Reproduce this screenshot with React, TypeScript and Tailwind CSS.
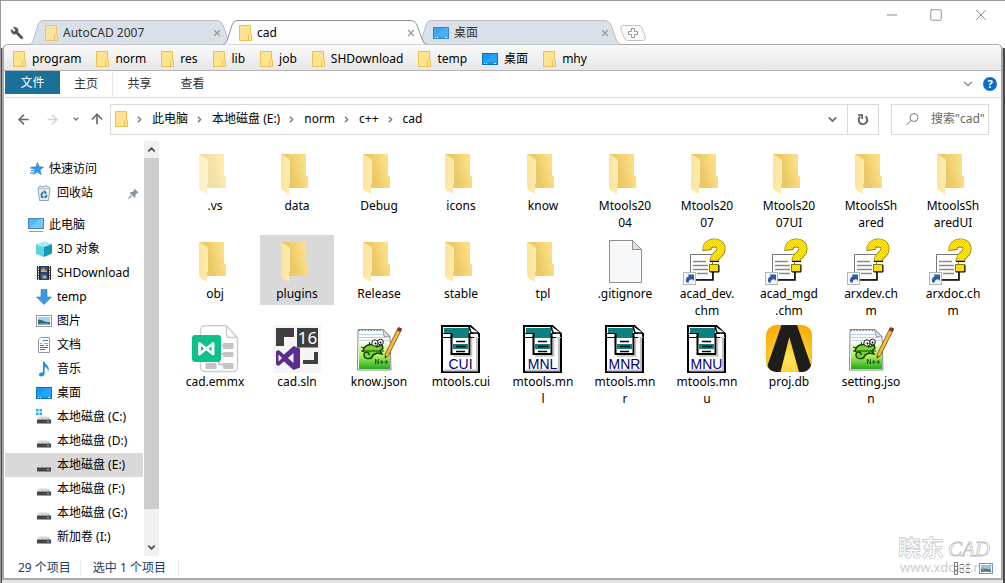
import React, { useState } from 'react';
import { ArrowLeft, ArrowRight, ArrowUp, ChevronDown, ChevronRight, ChevronUp, Minus, Square, Wrench, X } from 'lucide-react';

type FileKind = 'folder' | 'hidden' | 'blank' | 'chm' | 'emmx' | 'sln' | 'npp' | 'cui' | 'db';

interface FileEntry {
  name: string;
  kind: FileKind;
  tag?: string;
}

const FILES: FileEntry[] = [
  { name: '.vs', kind: 'hidden' },
  { name: 'data', kind: 'folder' },
  { name: 'Debug', kind: 'folder' },
  { name: 'icons', kind: 'folder' },
  { name: 'know', kind: 'folder' },
  { name: 'Mtools20\n04', kind: 'folder' },
  { name: 'Mtools20\n07', kind: 'folder' },
  { name: 'Mtools20\n07UI', kind: 'folder' },
  { name: 'MtoolsSh\nared', kind: 'folder' },
  { name: 'MtoolsSh\naredUI', kind: 'folder' },
  { name: 'obj', kind: 'folder' },
  { name: 'plugins', kind: 'folder' },
  { name: 'Release', kind: 'folder' },
  { name: 'stable', kind: 'folder' },
  { name: 'tpl', kind: 'folder' },
  { name: '.gitignore', kind: 'blank' },
  { name: 'acad_dev.\nchm', kind: 'chm' },
  { name: 'acad_mgd\n.chm', kind: 'chm' },
  { name: 'arxdev.ch\nm', kind: 'chm' },
  { name: 'arxdoc.ch\nm', kind: 'chm' },
  { name: 'cad.emmx', kind: 'emmx' },
  { name: 'cad.sln', kind: 'sln' },
  { name: 'know.json', kind: 'npp' },
  { name: 'mtools.cui', kind: 'cui', tag: 'CUI' },
  { name: 'mtools.mn\nl', kind: 'cui', tag: 'MNL' },
  { name: 'mtools.mn\nr', kind: 'cui', tag: 'MNR' },
  { name: 'mtools.mn\nu', kind: 'cui', tag: 'MNU' },
  { name: 'proj.db', kind: 'db' },
  { name: 'setting.jso\nn', kind: 'npp' },
];

/* ---------- small icons ---------- */

function SmallFolder({ className = '' }: { className?: string }) {
  return (
    <svg width="13" height="16" viewBox="0 0 13 16" className={`shrink-0 ${className}`}>
      <path d="M.5.5h11v8l1 .8v6.2H.5z" fill="#ffe391" stroke="#e9c24f" />
      <path d="M9.5 15V10l2-1.5" fill="none" stroke="#e9c24f" />
    </svg>
  );
}

function DesktopIcon({ className = '' }: { className?: string }) {
  return (
    <svg width="16" height="12" viewBox="0 0 16 12" className={`shrink-0 ${className}`}>
      <rect x=".5" y=".5" width="15" height="11" fill="#1499f5" stroke="#1070b8" />
      <path d="M1 9L11 1h4v8z" fill="#39aeff" opacity=".5" />
      <path d="M2 10.5h1M4 10.5h1M12 10.5h2" stroke="#fff" />
    </svg>
  );
}

function StarIcon() {
  return (
    <svg width="16" height="16" viewBox="0 0 16 16">
      <path d="M9.500 1.500l1.600 4.300 4.400.3-3.500 2.900 1.200 4.600-3.900-2.500-3.900 2.400 1.300-4.400-3.300-3 4.400-.2z" fill="#2f9bea" stroke="#1b7ac6" strokeWidth=".6" />
      <path d="M2 7h3M3 9.500h2.500M2 12h3" stroke="#1b7ac6" />
    </svg>
  );
}

function RecycleIcon() {
  return (
    <svg width="16" height="16" viewBox="0 0 16 16">
      <path d="M2 3l2-2 3 1 3-1.500L14 3l-1.500 12.500h-9z" fill="#e6eaed" stroke="#98a2a9" />
      <path d="M2 3.500h12" stroke="#b7bfc4" />
      <path d="M8 5.800l2 3M10.800 10l-1.200 2.200H8.500M5.200 10.200L7 7M5.300 10.500l.8 1.700h1.500" fill="none" stroke="#2374b8" strokeWidth="1.800" />
    </svg>
  );
}

function ComputerIcon() {
  return (
    <svg width="16" height="16" viewBox="0 0 16 16">
      <rect x=".5" y="1.500" width="15" height="10" fill="#4cb8f5" stroke="#4a88b0" />
      <path d="M1 11L12 2h3v9z" fill="#8bd6ff" opacity=".6" />
      <path d="M1 14.500h14" stroke="#8c9ba5" />
    </svg>
  );
}

function CubeIcon() {
  return (
    <svg width="16" height="16" viewBox="0 0 16 16">
      <path d="M0 3.500L8 .500l8 2.500-8 3z" fill="#a5ebf4" />
      <path d="M8 6l8-3v9.500L8 16z" fill="#149ab4" />
      <path d="M0 3.500L8 6v10l-8-3z" fill="#5ed3e3" />
    </svg>
  );
}

function FilmIcon() {
  return (
    <svg width="16" height="16" viewBox="0 0 16 16">
      <rect x="1" y="1" width="14" height="14" fill="#2a2a2c" />
      <path d="M2.500 1v14M13.500 1v14" stroke="#fff" strokeDasharray="1.500 1" />
      <rect x="4.500" y="1.500" width="7" height="6" fill="#3c5a9b" />
      <rect x="4.500" y="8.500" width="7" height="6" fill="#2758a8" />
      <path d="M5 5l3-2 1 2 2 1v1H5zM6 12l2-2 3 2-2 2z" fill="#d4ad3d" />
    </svg>
  );
}

function DownIcon() {
  return (
    <svg width="16" height="16" viewBox="0 0 16 16">
      <path d="M5 .5h6V8h4.500L8 15.500.5 8H5z" fill="#3b97e3" stroke="#2c7fc8" strokeWidth=".6" />
    </svg>
  );
}

function PictureIcon() {
  return (
    <svg width="16" height="16" viewBox="0 0 16 16">
      <rect x=".5" y="2.500" width="15" height="11" fill="#fff" stroke="#9a9a9a" />
      <rect x="2" y="4" width="12" height="8" fill="#a9d4ef" />
      <path d="M2 7c4-1 7 3 12 2v3H2z" fill="#356882" />
      <path d="M2 11c4-1 8-1 12 0v1H2z" fill="#8aa9ba" />
    </svg>
  );
}

function DocumentIcon() {
  return (
    <svg width="16" height="16" viewBox="0 0 16 16">
      <path d="M2.500 2.500L4.500.5h9v15h-11z" fill="#fff" stroke="#8f979c" />
      <path d="M7 3.500h5M4 8.500h4M10 8.500h2M4 10.500h8M4 12.500h5" stroke="#2a86b8" />
      <path d="M4 6.500h2M8 6.500h4" stroke="#7db4d2" />
    </svg>
  );
}

function MusicIcon() {
  return (
    <svg width="16" height="16" viewBox="0 0 16 16">
      <path d="M7 .5h1.500c.5 3 4.500 4 4.300 7.500 0 1-.5 2-1 2.500.3-2.500-1-4-3.100-4.500v6.500c0 2-1.500 3-3.200 3-1.500 0-2.500-.8-2.500-2 0-1.500 1.600-2.600 4-2.300z" fill="#1e93e0" />
    </svg>
  );
}

function DriveIcon({ system = false }: { system?: boolean }) {
  return (
    <svg width="16" height="16" viewBox="0 0 16 16">
      {system && <path d="M0 0h2.500v2.500H0zM3.500 0H6v2.500H3.500zM0 3.500h2.500V6H0zM3.500 3.500H6V6H3.500z" fill="#22b3e6" />}
      <path d="M3.500 7.500h9l2.500 3H1z" fill="#d3d6d8" />
      <rect x="1" y="10.500" width="14" height="4" fill="#41474b" />
      <rect x="11" y="12" width="2" height="1" fill="#5fe07a" />
    </svg>
  );
}

function PinIcon() {
  return (
    <svg width="11" height="11" viewBox="0 0 11 11" className="mr-1">
      <path d="M6.500.5l4 4-1.200.4-2 2 .2 2.100-.9.700L1.800 4.900l.8-.9 2 .1 1.800-2z" fill="#8495a5" />
      <path d="M3.500 7.500L.5 10.500" stroke="#8495a5" strokeWidth="1.200" />
    </svg>
  );
}

/* ---------- 48px file icons ---------- */

function FolderArt() {
  return (
    <>
      <defs>
        <linearGradient id="folderBack" x1="0" x2="1" y1=".3" y2="0">
          <stop offset=".3" stopColor="#ecc967" />
          <stop offset=".8" stopColor="#fbdf85" />
        </linearGradient>
        <linearGradient id="folderFlap" x1="0" x2="1">
          <stop offset="0" stopColor="#fee399" />
          <stop offset="1" stopColor="#ffecb3" />
        </linearGradient>
      </defs>
      <path d="M8 5h25v21.500l2 1V39H16z" fill="url(#folderBack)" />
      <path d="M8 5l7.500 4.500q1.500 1 1.500 3V34l-1 1.500V45l-6-3.500q-2-1.200-2-3z" fill="url(#folderFlap)" />
    </>
  );
}

function BlankArt() {
  return (
    <>
      <path d="M8.500 3.500h23l9 9v33h-32z" fill="#f7f8f9" stroke="#8f8f8f" />
      <path d="M31.500 3.500v9h9z" fill="#dfe2e4" stroke="#8f8f8f" />
    </>
  );
}

function ChmArt() {
  return (
    <>
      <defs>
        <pattern id="dither" width="2" height="2" patternUnits="userSpaceOnUse">
          <rect width="2" height="2" fill="#fff200" />
          <path d="M0 0h1v1H0zM1 1h1v1H1z" fill="#f0d000" />
        </pattern>
      </defs>
      <path d="M7.500 17.500h22v25h-22z" fill="#fff" stroke="#777" />
      <path d="M30 33v10H13" fill="none" stroke="#000" strokeWidth="1.500" />
      <path d="M10 24.500h13M10 28.500h15M10 32.500h15M14 36.500h11" stroke="#8a8a8a" strokeWidth="1.500" />
      <path d="M24 13.500C23 4 38.500 3.500 38 12c0 6-7 6-7 12.500" fill="none" stroke="#8a8000" strokeWidth="9" />
      <path d="M24 12.500C23 4 38.500 3.500 38 12c0 6-7 6-7 11.500" fill="none" stroke="url(#dither)" strokeWidth="7.500" />
      <rect x="26.500" y="27.500" width="9" height="7" fill="url(#dither)" stroke="#8a8000" />
      <path d="M27 35h9v-7M27 24.500h9" fill="none" stroke="#000" />
      <rect x=".5" y="35.500" width="12" height="12" fill="#f5f8fb" stroke="#b5b5b5" />
      <path d="M3 45c-.5-3 1-5.500 3-6L4.500 37.500H11V44L9.300 42.300C7 42.500 5.500 43.500 5.500 46z" fill="#2c5da3" />
    </>
  );
}

function EmmxArt() {
  return (
    <>
      <path d="M14 .7h21.500L46.500 13v29a4.500 4.500 0 0 1-4.500 4.500H14A4.500 4.500 0 0 1 9.500 42V5.200A4.500 4.500 0 0 1 14 .7z" fill="#fff" stroke="#cfcfcf" strokeWidth="1.500" />
      <path d="M35.500 1v8.500a3 3 0 0 0 3 3H46" fill="none" stroke="#cfcfcf" strokeWidth="1.500" />
      <path d="M28 20.500h6M28 29h6M28 32v7.500h6" fill="none" stroke="#c9c9c9" strokeWidth="2" />
      <rect x="32" y="18" width="10.500" height="6" rx="1" fill="#c4c4c4" />
      <rect x="14.500" y="38" width="11" height="6" rx="1" fill="#c4c4c4" />
      <rect x="32" y="27" width="10.500" height="5" rx="1" fill="#c4c4c4" />
      <rect x="32" y="38" width="10.500" height="6" rx="1" fill="#c4c4c4" />
      <rect x="1" y="10" width="29" height="27" rx="3" fill="#0fc08a" />
      <path d="M8.500 29V18.500L22 29V18.500M8.500 29l5-4M22 18.500l-5 4" fill="none" stroke="#fff" strokeWidth="2.800" strokeLinejoin="round" strokeLinecap="round" />
    </>
  );
}

function SlnArt() {
  return (
    <>
      <rect width="48" height="48" fill="#f5f5f5" />
      <path d="M3 3h18v9H11v9H3z" fill="#3f3f42" />
      <rect x="24" y="3" width="21" height="19.500" fill="#3f3f42" />
      <text x="34.500" y="19" textAnchor="middle" fontSize="17" fill="#fff" fontFamily="Noto Sans, sans-serif">16</text>
      <path d="M41 27h4v12H30v-4h11z" fill="#3f3f42" />
      <path d="M20.500 21L27 23.500v19L20.500 45 11 36.500 5.500 41 3 39.500v-13L5.500 25l5.500 4.500zM20.500 28L15 33l5.500 5zM5.500 29.500v7L9 33z" fill="#5c2d91" fillRule="evenodd" />
    </>
  );
}

function NppArt() {
  return (
    <>
      <defs>
        <linearGradient id="nppGreen" x1="0" x2="0" y1="0" y2="1">
          <stop offset="0" stopColor="#f4ffd8" />
          <stop offset=".5" stopColor="#a5ee5c" />
          <stop offset="1" stopColor="#25a81c" />
        </linearGradient>
      </defs>
      <path d="M3 4.500h25l7 7L36 45H2.500z" fill="#fbfbfb" stroke="#8b8b8b" />
      <path d="M4 9.500h24M4 12.500h28M4 15.500h30" stroke="#b9d7e8" />
      <path d="M3.500 5.500h25" stroke="#777" strokeDasharray="1.500 1.500" />
      <path d="M28 4.500l1 7 6 .5z" fill="#ddd" stroke="#8b8b8b" strokeWidth=".8" />
      <rect x="4" y="18" width="31" height="26" fill="url(#nppGreen)" />
      <path d="M8 27c0-7 9-10 14-5l5-2 1 3-3 3 2 3-5-1-4 2c-1 5-10 5-9-1 1-3 6-2 5 1" fill="#79d52d" stroke="#123c0b" strokeWidth="1.400" />
      <path d="M6 26h23M10 23l-4-1M15 20l-1-3" stroke="#123c0b" />
      <circle cx="20" cy="18" r="3.200" fill="#fff" stroke="#222" />
      <circle cx="25.500" cy="17" r="2.800" fill="#fff" stroke="#222" />
      <circle cx="20.500" cy="18.500" r="1" />
      <circle cx="25.500" cy="17.500" r="1" />
      <path d="M20.500 39v-5l3 5v-5M25 37h3.500M26.800 35v4M29.500 37H33M31.300 35v4" fill="none" stroke="#123c0b" strokeWidth=".8" />
      <path d="M43 3l3.500 1.500-13 26L30 33l.5-4.500z" fill="#f5b63a" stroke="#7b4a12" strokeWidth=".8" />
      <path d="M43.500 2l3.500 1.500-1.500 3.500L42 5.500z" fill="#8a2f2f" />
      <path d="M30 33l.2-2 1.500.8z" />
    </>
  );
}

function CuiArt({ tag }: { tag?: string }) {
  return (
    <>
      <path d="M5 1h28.500L42 9v38H5z" fill="#fff" stroke="#000" strokeWidth="2" />
      <path d="M40 12v33.500H7" fill="none" stroke="#c0c0c0" strokeWidth="2" />
      <rect x="7" y="3" width="25" height="5" fill="#0f8080" />
      <path d="M32 1.500l2 6.500h8" fill="#fff" stroke="#000" strokeWidth="1.600" />
      <path d="M6 12.500h36" stroke="#c0c0c0" />
      <rect x="14.500" y="12" width="18" height="17" fill="#fff" stroke="#000" strokeWidth="2" />
      <path d="M34.500 13v18H16" fill="none" stroke="#c0c0c0" strokeWidth="1.500" />
      <rect x="15" y="8" width="17" height="5" fill="#0f8080" />
      <path d="M14.500 8v5M32.500 8v5" stroke="#000" strokeWidth="2" />
      <path d="M6 8.500h9M32 8.500h5M6 12.500h9M32 12.500h5" stroke="#000" />
      <rect x="16" y="19" width="15" height="5" fill="#0f8080" />
      <path d="M19 16.500h9M19 21.500h10M19 26.500h9" stroke="#000" strokeWidth="1.400" />
      <text x="23.500" y="44" textAnchor="middle" fontSize="14" fill="#00007a" fontFamily="Liberation Sans, sans-serif">{tag}</text>
    </>
  );
}

function DbArt() {
  return (
    <>
      <defs>
        <radialGradient id="dbBack" cx=".5" cy=".75" r=".75">
          <stop offset="0" stopColor="#ffe75a" />
          <stop offset="1" stopColor="#fbae05" />
        </radialGradient>
      </defs>
      <rect x="1" y="0" width="46" height="47" rx="10" fill="url(#dbBack)" />
      <path d="M16.500 0h15.500L46 40.500Q44 46 38 47h-4L24.300 12 15.500 47H11Q4 46 2.500 40.500z" fill="#1d1d1b" />
    </>
  );
}

function FileIcon({ kind, tag }: { kind: FileKind; tag?: string }) {
  return (
    <svg width="48" height="48" viewBox="0 0 48 48" className={kind === 'hidden' ? 'opacity-60' : ''}>
      {(kind === 'folder' || kind === 'hidden') && <FolderArt />}
      {kind === 'blank' && <BlankArt />}
      {kind === 'chm' && <ChmArt />}
      {kind === 'emmx' && <EmmxArt />}
      {kind === 'sln' && <SlnArt />}
      {kind === 'npp' && <NppArt />}
      {kind === 'cui' && <CuiArt tag={tag} />}
      {kind === 'db' && <DbArt />}
    </svg>
  );
}

/* ---------- window parts ---------- */

interface TabProps {
  title: string;
  icon: React.ReactNode;
  active?: boolean;
}

function Tab({ title, icon, active }: TabProps) {
  return (
    <div className={`relative flex h-[25px] w-[194px] shrink-0 items-center ${active ? 'z-10' : ''}`}>
      <svg width="206" height="25" viewBox="0 0 206 25" className="absolute top-0 -left-1.5">
        <path
          d="M1 24.500C4 24 5 21 6 18L10 5Q11.500 .5 15 .5H188Q193 .5 195 5L200 19Q201.500 24 205 24.500"
          fill={active ? '#fdfdfd' : '#d9e0e8'}
          stroke={active ? '#8e9296' : '#b8bec4'}
        />
      </svg>
      <button className="relative flex h-full flex-1 items-center gap-[5px] pt-px pl-[11px] text-left">
        {icon}
        <span className={active ? 'text-black' : 'text-[#333]'}>{title}</span>
      </button>
      <button aria-label="关闭标签" className="relative mr-1.5 text-[#999]">
        <X size={10} strokeWidth={3} />
      </button>
    </div>
  );
}

function TitleBar() {
  return (
    <header className="flex h-[43px] shrink-0 items-start justify-between">
      <div className="flex items-center pt-[19px]">
        <button aria-label="设置" className="mr-2 ml-[9px] text-[#555]">
          <Wrench size={14} fill="currentColor" strokeWidth={1} className="-scale-x-100" />
        </button>
        <nav className="ml-0.5 flex">
          <Tab title="AutoCAD 2007" icon={<SmallFolder className="opacity-80" />} />
          <Tab title="cad" icon={<SmallFolder />} active />
          <Tab title="桌面" icon={<DesktopIcon className="opacity-80" />} />
        </nav>
        <button aria-label="新标签" className="ml-1">
          <svg width="26" height="16" viewBox="0 0 26 16">
            <path d="M3 .5h16q2 0 3 3l3 8q1 4-3 4H8q-3 0-4-3L.8 4Q0 .5 3 .5z" fill="#fafafa" stroke="#bfc3c6" />
            <path d="M11.500 3.500h3v3h3v3h-3v3h-3v-3h-3v-3h3z" fill="#fff" stroke="#999" />
          </svg>
        </button>
      </div>
      <div className="flex h-7 items-center gap-[29px] pr-[15px] text-[#888]">
        <button aria-label="最小化">
          <Minus size={16} strokeWidth={1.5} />
        </button>
        <button aria-label="最大化">
          <Square size={14} strokeWidth={1.5} />
        </button>
        <button aria-label="关闭">
          <X size={18} strokeWidth={1.3} />
        </button>
      </div>
    </header>
  );
}

const BOOKMARKS = ['program', 'norm', 'res', 'lib', 'job', 'SHDownload', 'temp', '桌面', 'mhy'];

function BookmarkBar() {
  return (
    <nav className="flex h-[26px] items-center gap-[15px] rounded-t border-b border-[#b4b4b4] bg-linear-to-b from-[#fafafa] to-[#e7e7e7] px-[9px] pt-0.5">
      {BOOKMARKS.map((name) => (
        <button key={name} className="flex items-center gap-1.5">
          {name === '桌面' ? <DesktopIcon /> : <SmallFolder />}
          {name}
        </button>
      ))}
    </nav>
  );
}

function Ribbon() {
  return (
    <div className="ml-px flex h-[27px] items-start border-b border-[#dadbdc]">
      <button className="h-[23px] w-[55px] bg-[#1a7099] text-white">文件</button>
      <button className="h-[26px] w-[53px] border-r border-[#e8e8e8] text-[#333]">主页</button>
      <button className="h-[26px] w-[53px] text-[#333]">共享</button>
      <button className="h-[26px] w-[53px] text-[#333]">查看</button>
      <div className="ml-auto flex h-[26px] items-center gap-2 pr-1">
        <button aria-label="展开功能区" className="text-[#888]">
          <ChevronDown size={14} strokeWidth={2} />
        </button>
        <button aria-label="帮助" className="h-3.5 w-3.5 rounded-full bg-[#0a6fc9] text-[11px] leading-[14px] font-bold text-white">
          ?
        </button>
      </div>
    </div>
  );
}

const CRUMBS = ['此电脑', '本地磁盘 (E:)', 'norm', 'c++', 'cad'];

function AddressRow() {
  return (
    <div className="flex h-[43px] items-center pr-3 pb-px pl-3">
      <div className="flex w-[94px] items-center">
        <button aria-label="后退" className="text-[#666]">
          <ArrowLeft size={15} strokeWidth={2.4} />
        </button>
        <button aria-label="前进" className="ml-3.5 text-[#d4d4d4]">
          <ArrowRight size={15} strokeWidth={2.4} />
        </button>
        <button aria-label="最近" className="ml-3 text-[#777]">
          <ChevronDown size={8} strokeWidth={4} />
        </button>
        <button aria-label="上移" className="ml-[9px] text-[#666]">
          <ArrowUp size={16} strokeWidth={2.4} />
        </button>
      </div>
      <div className="flex h-[31px] flex-1 items-center border border-[#d9d9d9] pl-1">
        <SmallFolder />
        {CRUMBS.map((crumb) => (
          <React.Fragment key={crumb}>
            <ChevronRight size={9} strokeWidth={4} className="mr-2 ml-[7px] shrink-0 text-[#777]" />
            <button className="whitespace-nowrap">{crumb}</button>
          </React.Fragment>
        ))}
        <button aria-label="历史记录" className="mr-2 ml-auto text-[#666]">
          <ChevronDown size={13} strokeWidth={3} />
        </button>
        <button aria-label="刷新" className="flex h-full w-[31px] items-center justify-center border-l border-[#d9d9d9]">
          <svg width="12" height="13" viewBox="0 0 12 13" fill="none" stroke="#555" strokeWidth="1.700">
            <path d="M8.500 3.500A4.300 4.300 0 1 1 3.300 3.600" />
            <path d="M1 2h4.200v4" strokeWidth="1.500" />
          </svg>
        </button>
      </div>
      <div className="ml-3 flex h-[31px] w-[98px] items-center border border-[#d9d9d9] pl-3.5">
        <svg width="13" height="13" viewBox="0 0 13 13" fill="none" stroke="#777" className="shrink-0">
          <circle cx="8" cy="4.500" r="4" />
          <path d="M5 7.500L.5 12" />
        </svg>
        <input type="text" aria-label="搜索" placeholder={'搜索"cad"'} className="ml-3 w-full min-w-0 outline-none placeholder:text-[#666]" />
      </div>
    </div>
  );
}

interface TreeItem {
  label: string;
  icon: React.ReactNode;
  root?: boolean;
  pinned?: boolean;
}

const TREE: TreeItem[][] = [
  [
    { label: '快速访问', icon: <StarIcon />, root: true },
    { label: '回收站', icon: <RecycleIcon />, pinned: true },
  ],
  [
    { label: '此电脑', icon: <ComputerIcon />, root: true },
    { label: '3D 对象', icon: <CubeIcon /> },
    { label: 'SHDownload', icon: <FilmIcon /> },
    { label: 'temp', icon: <DownIcon /> },
    { label: '图片', icon: <PictureIcon /> },
    { label: '文档', icon: <DocumentIcon /> },
    { label: '音乐', icon: <MusicIcon /> },
    { label: '桌面', icon: <DesktopIcon /> },
    { label: '本地磁盘 (C:)', icon: <DriveIcon system /> },
    { label: '本地磁盘 (D:)', icon: <DriveIcon /> },
    { label: '本地磁盘 (E:)', icon: <DriveIcon /> },
    { label: '本地磁盘 (F:)', icon: <DriveIcon /> },
    { label: '本地磁盘 (G:)', icon: <DriveIcon /> },
    { label: '新加卷 (I:)', icon: <DriveIcon /> },
  ],
];

function Sidebar() {
  return (
    <aside className="flex w-[155px] shrink-0">
      <div className="flex-1 space-y-2 overflow-hidden pt-4 pl-px">
        {TREE.map((group) => (
          <ul key={group[0].label}>
            {group.map((item) => (
              <li key={item.label} className={item.label === '本地磁盘 (E:)' ? 'bg-[#d9d9d9]' : ''}>
                <button className={`flex h-6 w-full items-center gap-[5px] whitespace-nowrap ${item.root ? 'pl-[23px]' : 'pl-[31px]'}`}>
                  {item.icon}
                  <span className="flex-1 text-left">{item.label}</span>
                  {item.pinned && <PinIcon />}
                </button>
              </li>
            ))}
          </ul>
        ))}
      </div>
      <div className="ml-px flex w-[15px] flex-col bg-[#f1f1f1] text-[#505050]">
        <button aria-label="向上滚动" className="flex h-[17px] items-center justify-center">
          <ChevronUp size={11} strokeWidth={4} />
        </button>
        <div className="flex-1">
          <div className="h-[92%] bg-[#cdcdcd]" />
        </div>
        <button aria-label="向下滚动" className="flex h-[17px] items-center justify-center">
          <ChevronDown size={11} strokeWidth={4} />
        </button>
      </div>
    </aside>
  );
}

interface FileGridProps {
  selected: string;
  onSelect: (name: string) => void;
}

function FileGrid({ selected, onSelect }: FileGridProps) {
  return (
    <main className="grid flex-1 auto-rows-[84px] grid-cols-[repeat(auto-fill,74px)] content-start items-start gap-x-2 gap-y-1 overflow-hidden pt-1.5 pl-[19px]">
      {FILES.map((file) => (
        <button
          key={file.name}
          onClick={() => onSelect(file.name)}
          className={`flex flex-col items-center pt-0.5 pb-[3px] ${file.name === selected ? 'bg-[#d9d9d9]' : ''}`}
        >
          <FileIcon kind={file.kind} tag={file.tag} />
          <span className="leading-[17px] whitespace-pre">{file.name}</span>
        </button>
      ))}
    </main>
  );
}

function StatusBar() {
  return (
    <footer className="relative flex h-[22px] shrink-0 items-center pt-0.5 pl-3.5 text-[#1e3b63]">
      <span className="border-r border-[#ececec] pr-[9px]">29 个项目</span>
      <span className="border-r border-[#ececec] px-3">选中 1 个项目</span>
      <div className="ml-auto flex items-center gap-2 pr-2">
        <button aria-label="详细信息">
          <svg width="17" height="13" viewBox="0 0 17 13" fill="none" stroke="#777">
            <path d="M.5.5h3v12h-3zM.5 4.500h3M.5 8.500h3M6 2.500h4M12 2.500h4M6 6.500h4M12 6.500h4M6 10.500h4M12 10.500h4" />
          </svg>
        </button>
        <button aria-label="大图标">
          <svg width="14" height="11" viewBox="0 0 14 11">
            <rect x=".5" y=".5" width="13" height="10" fill="#fff" stroke="#6e93b5" />
            <rect x="2" y="2" width="10" height="7" fill="#9cc8e8" />
            <path d="M2 6c4-2 6 1 10 0v3H2z" fill="#48798f" />
          </svg>
        </button>
      </div>
      {/* site watermark over the corner */}
      <div className="pointer-events-none absolute right-1 bottom-0 opacity-60">
        <svg width="100" height="56" viewBox="0 0 100 56">
          <text x="1" y="34" fontSize="23" fontWeight="700" fill="#fff" stroke="#aaa" strokeWidth=".8" fontFamily="Noto Sans CJK SC, sans-serif">晓东</text>
          <text x="51" y="34" fontSize="21" fontStyle="italic" fill="#fff" stroke="#999" strokeWidth=".8" fontFamily="Liberation Serif, serif">CAD</text>
          <text x="3" y="50" fontSize="13" fill="#aaa" fontFamily="Noto Sans, sans-serif">www.xdcad.net</text>
        </svg>
      </div>
    </footer>
  );
}

export default function App() {
  const [selected, setSelected] = useState('plugins');

  return (
    <div className="flex h-screen flex-col overflow-hidden border-t border-l border-[#9a9a9a] bg-white font-['Noto_Sans','Noto_Sans_CJK_SC',sans-serif] text-[12px] leading-4 text-black">
      <TitleBar />
      <div className="flex min-h-0 flex-1 bg-linear-to-b from-white from-[1%] to-[#e4e4e4] to-[1%]">
        <div className="mt-1 w-px bg-[#4a4a4a]" />
        <div className="mb-[3px] flex min-w-0 flex-1 flex-col rounded-t-md border-2 border-t border-[#a8a8a8] bg-white">
          <BookmarkBar />
          <Ribbon />
          <AddressRow />
          <div className="flex min-h-0 flex-1">
            <Sidebar />
            <FileGrid selected={selected} onSelect={setSelected} />
          </div>
          <StatusBar />
        </div>
        <div className="mt-1 w-0.5 bg-[#4a4a4a]" />
      </div>
    </div>
  );
}
